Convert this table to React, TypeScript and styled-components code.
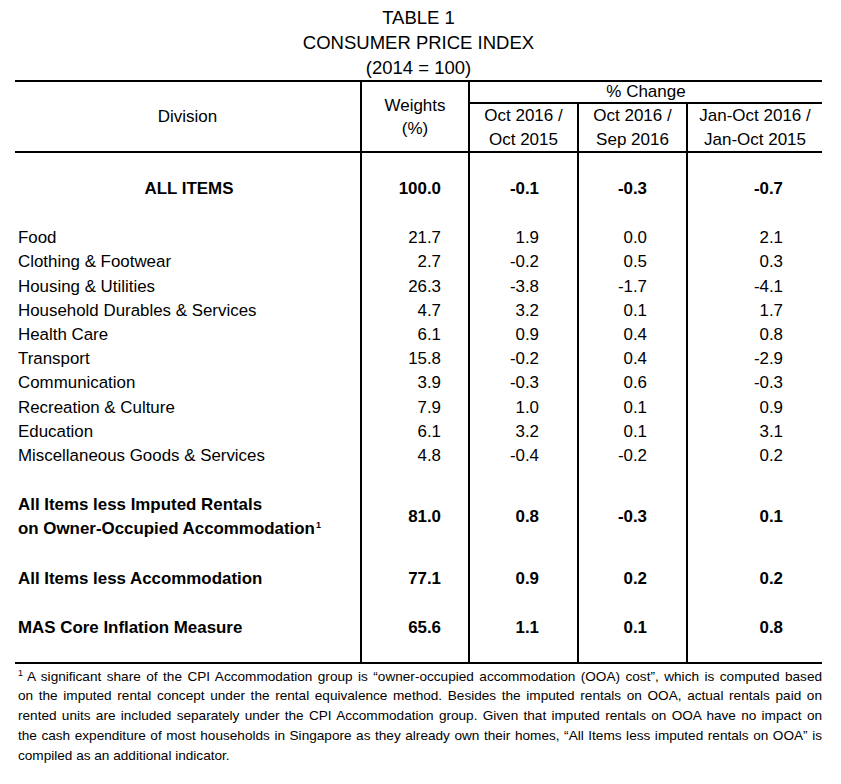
import React from 'react';
import styled, { createGlobalStyle } from 'styled-components';

const Global = createGlobalStyle`
  html, body { margin: 0; padding: 0; background: #fff; }
  body { font-family: "Liberation Sans", Arial, sans-serif; color: #000; }
`;

const Page = styled.div`
  width: 841px;
  height: 784px;
  box-sizing: border-box;
  padding: 5px 19px 0 15px;
`;

const Title = styled.div`
  text-align: center;
  font-size: 18.5px;
  line-height: 25px;
`;

const Table = styled.table`
  width: 807px;
  border-collapse: collapse;
  table-layout: fixed;
  border-top: 2px solid #000;
  border-bottom: 2px solid #000;
  font-size: 16.9px;
`;

const widths = [346, 108, 109, 109, 135];
const numPad = [0, 27, 38, 39, 39];

const Th = styled.th<{ $left?: boolean; $right?: boolean; $h: number; $lh: number }>`
  font-weight: normal;
  font-size: 17px;
  padding: 0;
  text-align: center;
  vertical-align: middle;
  line-height: ${(p) => p.$lh}px;
  height: ${(p) => p.$h}px;
  border-left: ${(p) => (p.$left ? '2px solid #000' : 'none')};
  border-right: ${(p) => (p.$right ? '2px solid #000' : 'none')};
  border-bottom: 2px solid #000;
`;

const Td = styled.td<{ $col: number; $bold?: boolean; $pt: number; $center?: boolean; $h?: number }>`
  padding: ${(p) => p.$pt}px ${(p) => numPad[p.$col]}px 0 ${(p) => (p.$col === 0 ? 3 : 0)}px;
  line-height: 24.2px;
  height: ${(p) => (p.$h !== undefined ? p.$h : 24.2)}px;
  font-weight: ${(p) => (p.$bold ? 'bold' : 'normal')};
  text-align: ${(p) => (p.$col === 0 ? (p.$center ? 'center' : 'left') : 'right')};
  vertical-align: middle;
  white-space: nowrap;
  border-left: ${(p) => (p.$col === 1 ? '2px solid #000' : 'none')};
  border-right: ${(p) => (p.$col >= 1 && p.$col <= 3 ? '2px solid #000' : 'none')};
`;

const Lines = styled.span`
  display: block;
  line-height: 24px;
`;

const Sup = styled.sup`
  font-size: 9px;
  vertical-align: top;
  position: relative;
  top: -4px;
  margin-left: 1px;
`;

const Foot = styled.div`
  margin-top: 3px;
  padding-left: 3px;
  font-size: 13.6px;
  line-height: 19.8px;
`;

const FootLine = styled.div<{ $last?: boolean }>`
  height: 19.8px;
  text-align: justify;
  text-align-last: ${(p) => (p.$last ? 'left' : 'justify')};
  white-space: nowrap;
`;

const FootSup = styled.span`
  font-size: 9px;
  line-height: 0;
  position: relative;
  top: -5px;
  margin-right: 4px;
`;

type Row = [string, string, string, string, string];

const items: Row[] = [
  ['Food', '21.7', '1.9', '0.0', '2.1'],
  ['Clothing & Footwear', '2.7', '-0.2', '0.5', '0.3'],
  ['Housing & Utilities', '26.3', '-3.8', '-1.7', '-4.1'],
  ['Household Durables & Services', '4.7', '3.2', '0.1', '1.7'],
  ['Health Care', '6.1', '0.9', '0.4', '0.8'],
  ['Transport', '15.8', '-0.2', '0.4', '-2.9'],
  ['Communication', '3.9', '-0.3', '0.6', '-0.3'],
  ['Recreation & Culture', '7.9', '1.0', '0.1', '0.9'],
  ['Education', '6.1', '3.2', '0.1', '3.1'],
  ['Miscellaneous Goods & Services', '4.8', '-0.4', '-0.2', '0.2'],
];

function DataRow({ row, bold, pt, center }: { row: Row; bold?: boolean; pt: number; center?: boolean }) {
  return (
    <tr>
      {row.map((v, i) => (
        <Td key={i} $col={i} $bold={bold} $pt={pt} $center={center && i === 0}>
          {v}
        </Td>
      ))}
    </tr>
  );
}

export default function App() {
  return (
    <>
      <Global />
      <Page>
        <Title>TABLE 1</Title>
        <Title>CONSUMER PRICE INDEX</Title>
        <Title>(2014 = 100)</Title>
        <Table>
          <colgroup>
            {widths.map((w, i) => (
              <col key={i} style={{ width: w }} />
            ))}
          </colgroup>
          <thead>
            <tr>
              <Th rowSpan={2} $h={67} $lh={24}>
                Division
              </Th>
              <Th rowSpan={2} $left $right $h={67} $lh={23}>
                Weights
                <br />
                (%)
              </Th>
              <Th colSpan={3} $h={20} $lh={20}>
                % Change
              </Th>
            </tr>
            <tr>
              <Th $right $h={46} $lh={23.5}>
                Oct 2016 /
                <br />
                Oct 2015
              </Th>
              <Th $right $h={46} $lh={23.5}>
                Oct 2016 /
                <br />
                Sep 2016
              </Th>
              <Th $h={46} $lh={23.5}>
                Jan-Oct 2016 /
                <br />
                Jan-Oct 2015
              </Th>
            </tr>
          </thead>
          <tbody>
            <DataRow row={['ALL ITEMS', '100.0', '-0.1', '-0.3', '-0.7']} bold pt={24} center />
            {items.map((r, i) => (
              <DataRow key={r[0]} row={r} pt={i === 0 ? 25 : 0} />
            ))}
            <tr>
              <Td $col={0} $bold $pt={25} $h={48}>
                <Lines>
                  All Items less Imputed Rentals
                  <br />
                  on Owner-Occupied Accommodation<Sup>1</Sup>
                </Lines>
              </Td>
              {['81.0', '0.8', '-0.3', '0.1'].map((v, i) => (
                <Td key={i} $col={i + 1} $bold $pt={25} $h={48}>
                  {v}
                </Td>
              ))}
            </tr>
            <DataRow row={['All Items less Accommodation', '77.1', '0.9', '0.2', '0.2']} bold pt={26} />
            <DataRow row={['MAS Core Inflation Measure', '65.6', '1.1', '0.1', '0.8']} bold pt={25} />
            <tr>
              {widths.map((_, i) => (
                <Td key={i} $col={i} $pt={0} $h={21} />
              ))}
            </tr>
          </tbody>
        </Table>
        <Foot>
          <FootLine>
            <FootSup>1</FootSup>A significant share of the CPI Accommodation group is “owner-occupied accommodation (OOA) cost”, which is computed based
          </FootLine>
          <FootLine>
            on the imputed rental concept under the rental equivalence method. Besides the imputed rentals on OOA, actual rentals paid on
          </FootLine>
          <FootLine>
            rented units are included separately under the CPI Accommodation group. Given that imputed rentals on OOA have no impact on
          </FootLine>
          <FootLine>
            the cash expenditure of most households in Singapore as they already own their homes, “All Items less imputed rentals on OOA” is
          </FootLine>
          <FootLine $last>compiled as an additional indicator.</FootLine>
        </Foot>
      </Page>
    </>
  );
}
